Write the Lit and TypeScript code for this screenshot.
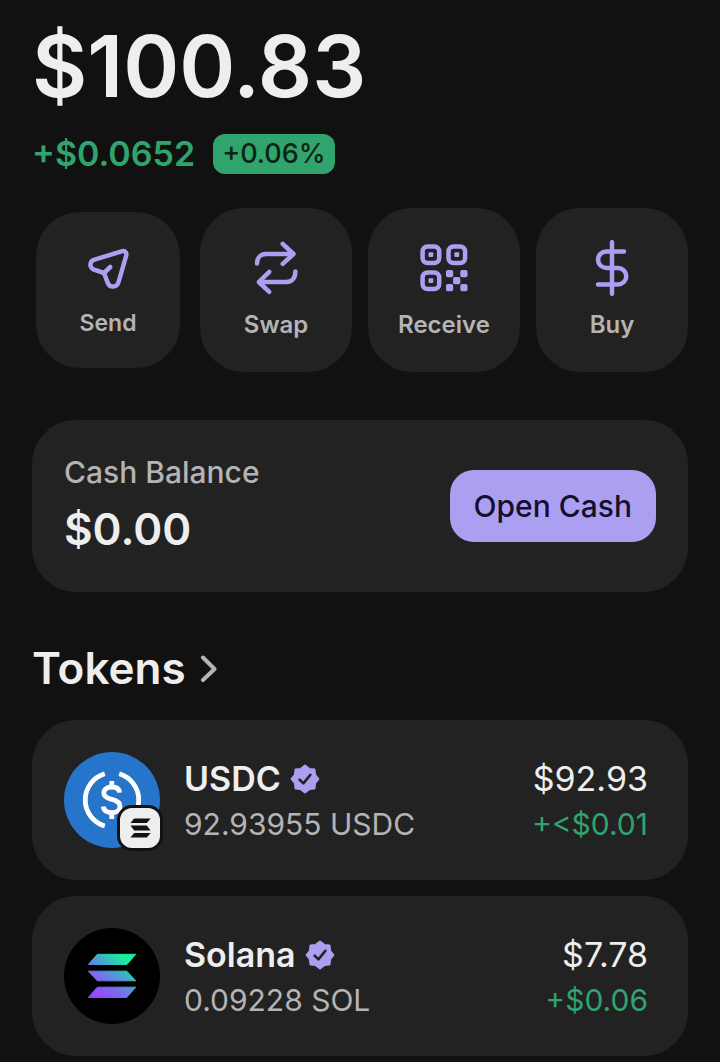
import { LitElement, html, css, svg } from "lit";
import { customElement, property } from "lit/decorators.js";
import { classMap } from "lit/directives/class-map.js";

const sendIcon = svg`<svg class="icon" viewBox="81 242 54 54" aria-hidden="true">
  <path d="M104 273 L94 269.6 C89 267.5 89.3 261.2 94.5 259.7 L121.5 251.4 C124.8 250.4 127 252.4 126.2 255.7 L118.6 282 C117 287.9 109.4 288 107.7 282.6 Z" />
  <path d="M104 273 L110.3 267" />
</svg>`;

const swapIcon = svg`<svg class="icon" viewBox="248 240 56 56" aria-hidden="true">
  <path d="M257 263.5 C257 258 260.5 254 266 254 H293" />
  <path d="M282.7 243.8 L293.5 254 L282.7 263.8" />
  <path d="M295.4 271.5 C295.4 278 292 282 286 282 H259.5" />
  <path d="M269.3 271.8 L258.8 282 L269.3 291.8" />
</svg>`;

const receiveIcon = svg`<svg class="icon" viewBox="416 240 56 56" aria-hidden="true">
  <rect x="422.6" y="246.4" width="16.6" height="16.6" rx="5" />
  <rect x="448.5" y="246.4" width="16.6" height="16.6" rx="5" />
  <rect x="422.6" y="272.4" width="16.6" height="16.6" rx="5" />
  <g class="solid">
    <rect x="428.5" y="252.3" width="4.8" height="4.8" rx="1" />
    <rect x="454.4" y="252.3" width="4.8" height="4.8" rx="1" />
    <rect x="428.5" y="278.3" width="4.8" height="4.8" rx="1" />
    <rect x="446" y="270" width="7.2" height="7.2" rx="1.8" />
    <rect x="460.3" y="270" width="7.2" height="7.2" rx="1.8" />
    <rect x="453.1" y="277" width="7.2" height="7.2" rx="1.8" />
    <rect x="446" y="284" width="7.2" height="7.2" rx="1.8" />
    <rect x="460.3" y="284" width="7.2" height="7.2" rx="1.8" />
  </g>
</svg>`;

const buyIcon = svg`<svg class="icon" viewBox="584 240 56 56" aria-hidden="true">
  <path d="M612 242.2 V293.8" />
  <path d="M624 251.4 H606.3 A8.2 8.2 0 0 0 606.3 267.9 H618 A8.2 8.2 0 0 1 618 284.4 H598" />
</svg>`;

const usdcLogo = svg`<svg class="logo" viewBox="0 0 96 96" aria-hidden="true">
  <circle cx="48" cy="48" r="48" fill="#2775ca" />
  <g fill="none" stroke="#fff" stroke-width="4.8">
    <path d="M40.8 21.8 A27.2 27.2 0 0 0 40.8 74" />
    <path d="M55.2 21.8 A27.2 27.2 0 0 1 55.2 74" />
    <path d="M55.6 40.6 C55.3 37 52.4 35 47.8 35 C43 35 39.8 37.4 39.8 41 C39.8 45 43 46.3 47.8 47.4 C53 48.6 56 50.4 56 54.5 C56 58.4 52.6 60.7 47.8 60.7 C42.8 60.7 39.6 58.3 39.4 54.5" />
    <path d="M47.8 29 V35 M47.8 60.5 V67" />
  </g>
</svg>`;

const solanaLogo = svg`<svg class="logo" viewBox="0 0 96 96" aria-hidden="true">
  <defs>
    <linearGradient id="sol" gradientUnits="userSpaceOnUse" x1="30" y1="72" x2="66" y2="24">
      <stop offset="0.05" stop-color="#9945ff" />
      <stop offset="0.35" stop-color="#7a6bf0" />
      <stop offset="0.6" stop-color="#45a8cf" />
      <stop offset="0.85" stop-color="#19ec9c" />
    </linearGradient>
  </defs>
  <circle cx="48" cy="48" r="48" fill="#000" />
  <g fill="url(#sol)" stroke="url(#sol)" stroke-width="1" stroke-linejoin="round">
    <path d="M24.3 36.5 L33.3 26.3 H71.8 L62.8 36.5 Z" />
    <path d="M24.3 43.2 H62.8 L71.8 52.8 H33.3 Z" />
    <path d="M24.3 69.4 L33.3 59.2 H71.8 L62.8 69.4 Z" />
  </g>
</svg>`;

const chainMark = svg`<svg class="chain-mark" viewBox="0 0 21 20" aria-hidden="true">
  <path d="M0.4 5.1 L4.2 0.4 H20.6 L16.8 5.1 Z M0.4 7.5 H16.8 L20.6 12.4 H4.2 Z M0.4 19.6 L4.2 14.9 H20.6 L16.8 19.6 Z" />
</svg>`;

const verifiedMark = svg`<svg class="verified" viewBox="0 0 30 30" role="img" aria-label="Verified">
  <path class="seal" d="M15 1.6 L19.2 4.9 L24.5 5.5 L25.1 10.8 L28.4 15 L25.1 19.2 L24.5 24.5 L19.2 25.1 L15 28.4 L10.8 25.1 L5.5 24.5 L4.9 19.2 L1.6 15 L4.9 10.8 L5.5 5.5 L10.8 4.9 Z" />
  <path class="tick" d="M9.6 15.6 L13.4 19.4 L20.4 10.8" />
</svg>`;

@customElement("action-button")
class ActionButton extends LitElement {
  @property() label = "";
  @property({ attribute: false }) icon: unknown = null;
  @property({ type: Boolean }) pressed = false;

  static styles = css`
    :host {
      display: grid;
    }
    .action {
      display: flex;
      flex-direction: column;
      align-items: center;
      gap: 15px;
      padding: 32px 0 33px;
      border: 0;
      border-radius: 44px;
      background: #222;
      color: #b4b4b4;
      font: 600 24px/28px Inter, "Noto Sans", sans-serif;
      cursor: pointer;
    }
    .action.pressed {
      margin: 4px;
      gap: 13px;
      padding: 30px 0 31px;
      font-size: 23px;
    }
    .icon {
      display: block;
      width: 56px;
      height: 56px;
      fill: none;
      stroke: #ab9ff2;
      stroke-width: 4.5;
      stroke-linecap: round;
      stroke-linejoin: round;
    }
    .pressed .icon {
      width: 54px;
      height: 54px;
    }
    .icon .solid {
      fill: #ab9ff2;
      stroke: none;
    }
  `;

  render() {
    return html`<button type="button" class=${classMap({ action: true, pressed: this.pressed })}>
      ${this.icon}<span>${this.label}</span>
    </button>`;
  }
}

@customElement("token-row")
class TokenRow extends LitElement {
  @property() name = "";
  @property() amount = "";
  @property() value = "";
  @property() change = "";
  @property({ attribute: false }) logo: unknown = null;
  @property({ type: Boolean }) chain = false;

  static styles = css`
    :host {
      display: block;
    }
    .row {
      display: flex;
      align-items: center;
      gap: 24px;
      width: 100%;
      box-sizing: border-box;
      padding: 32px 40px 32px 32px;
      border: 0;
      border-radius: 44px;
      background: #222;
      color: #eee;
      font: 400 30px/42px Inter, "Noto Sans", sans-serif;
      text-align: left;
      cursor: pointer;
    }
    .avatar {
      position: relative;
      width: 96px;
      height: 96px;
      flex: none;
    }
    .logo {
      display: block;
      width: 96px;
      height: 96px;
    }
    .chain {
      position: absolute;
      right: -3px;
      bottom: -3px;
      display: grid;
      place-items: center;
      width: 40px;
      height: 40px;
      border: 3px solid #111;
      border-radius: 15px;
      background: #eee;
    }
    .chain-mark {
      width: 21px;
      height: 20px;
      fill: #111;
    }
    .details {
      display: flex;
      flex-direction: column;
      flex: 1;
      min-width: 0;
    }
    .title {
      display: flex;
      align-items: center;
      gap: 9px;
      font-size: 34px;
      font-weight: 600;
      line-height: 48px;
    }
    .verified {
      width: 30px;
      height: 30px;
    }
    .seal {
      fill: #ab9ff2;
      stroke: #ab9ff2;
      stroke-width: 2;
      stroke-linejoin: round;
    }
    .tick {
      fill: none;
      stroke: #222;
      stroke-width: 2.6;
      stroke-linecap: round;
      stroke-linejoin: round;
    }
    .amount {
      color: #b4b4b4;
    }
    .figures {
      display: flex;
      flex-direction: column;
      align-items: flex-end;
    }
    .value {
      font-size: 34px;
      line-height: 48px;
    }
    .change {
      color: #30a46c;
    }
  `;

  render() {
    return html`<button type="button" class="row">
      <span class="avatar">
        ${this.logo}
        ${this.chain ? html`<span class="chain">${chainMark}</span>` : null}
      </span>
      <span class="details">
        <span class="title"><span>${this.name}</span>${verifiedMark}</span>
        <span class="amount">${this.amount}</span>
      </span>
      <span class="figures">
        <span class="value">${this.value}</span>
        <span class="change">${this.change}</span>
      </span>
    </button>`;
  }
}

@customElement("app-root")
class AppRoot extends LitElement {
  static styles = css`
    :host {
      display: block;
      box-sizing: border-box;
      min-height: 100vh;
      padding: 17px 32px 6px;
      background: #111;
      color: #eee;
      font-family: Inter, "Noto Sans", sans-serif;
    }
    .total {
      margin: 0;
      font-size: 85px;
      font-weight: 600;
      line-height: 100px;
    }
    .delta {
      display: flex;
      align-items: center;
      gap: 18px;
      margin-top: 17px;
      color: #30a46c;
      font-size: 34px;
      font-weight: 600;
      line-height: 40px;
    }
    .percent {
      padding: 0 9px;
      border-radius: 12px;
      background: #30a46c;
      color: #0b2417;
      font-size: 27px;
      font-weight: 500;
    }
    .actions {
      display: grid;
      grid-template-columns: repeat(4, 1fr);
      gap: 16px;
      margin-top: 34px;
    }
    .cash {
      display: flex;
      align-items: center;
      justify-content: space-between;
      margin-top: 48px;
      padding: 34px 32px;
      border-radius: 44px;
      background: #222;
    }
    .cash-text {
      display: flex;
      flex-direction: column;
      gap: 10px;
    }
    .cash-label {
      color: #b4b4b4;
      font-size: 30px;
      font-weight: 500;
      line-height: 36px;
    }
    .cash-value {
      font-size: 44px;
      font-weight: 600;
      line-height: 58px;
    }
    .open {
      padding: 0 24px;
      border: 0;
      border-radius: 24px;
      background: #ab9ff2;
      color: #150f2e;
      font: 500 30px/72px Inter, "Noto Sans", sans-serif;
      cursor: pointer;
    }
    .heading {
      margin: 48px 0 24px;
      font-size: 44px;
      font-weight: 600;
      line-height: 56px;
    }
    .heading-link {
      display: inline-flex;
      align-items: center;
      gap: 14px;
      color: inherit;
      text-decoration: none;
    }
    .chevron {
      width: 18px;
      height: 28px;
      fill: none;
      stroke: #b4b4b4;
      stroke-width: 4;
      stroke-linecap: round;
      stroke-linejoin: round;
    }
    .tokens {
      display: grid;
      gap: 16px;
    }
  `;

  render() {
    return html`
      <h1 class="total">$100.83</h1>
      <div class="delta">
        <span>+$0.0652</span>
        <span class="percent">+0.06%</span>
      </div>
      <nav class="actions" aria-label="Wallet actions">
        <action-button label="Send" .icon=${sendIcon} pressed></action-button>
        <action-button label="Swap" .icon=${swapIcon}></action-button>
        <action-button label="Receive" .icon=${receiveIcon}></action-button>
        <action-button label="Buy" .icon=${buyIcon}></action-button>
      </nav>
      <section class="cash">
        <div class="cash-text">
          <span class="cash-label">Cash Balance</span>
          <span class="cash-value">$0.00</span>
        </div>
        <button type="button" class="open">Open Cash</button>
      </section>
      <h2 class="heading">
        <a class="heading-link" href="#tokens">
          <span>Tokens</span>
          <svg class="chevron" viewBox="0 0 18 28" aria-hidden="true">
            <path d="M3 3.5 L14.5 15 L3 26" />
          </svg>
        </a>
      </h2>
      <div class="tokens" id="tokens">
        <token-row name="USDC" amount="92.93955 USDC" value="$92.93" change="+<$0.01" .logo=${usdcLogo} chain></token-row>
        <token-row name="Solana" amount="0.09228 SOL" value="$7.78" change="+$0.06" .logo=${solanaLogo}></token-row>
      </div>
    `;
  }
}
